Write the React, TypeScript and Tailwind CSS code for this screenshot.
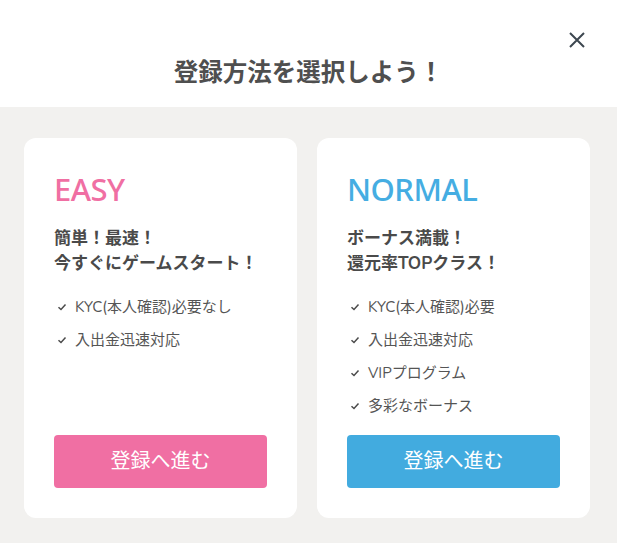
import React from "react";

const font = { fontFamily: '"Nunito", Lato, "Noto Sans CJK JP", sans-serif' };

interface PlanProps {
  name: string;
  accent: "pink" | "blue";
  lead: string[];
  points: string[];
}

function Check() {
  return (
    <svg width="10" height="10" viewBox="0 0 10 10" className="shrink-0">
      <path d="M1.5 5.2 L4 7.5 L8.5 2.5" fill="none" stroke="#4a4a4a" strokeWidth="1.5" />
    </svg>
  );
}

function PlanCard({ name, accent, lead, points }: PlanProps) {
  const isPink = accent === "pink";
  return (
    <div className="flex flex-col w-[273px] h-[380px] bg-white rounded-[12px] pt-[33px] px-[30px] pb-[30px]">
      <div
        className={`text-[31px] leading-[36px] font-medium ${isPink ? "text-[#f06fa3]" : "text-[#45ade2]"}`}
        style={{ fontFamily: '"Noto Sans", "Liberation Sans", sans-serif', letterSpacing: "-0.5px" }}
      >
        {name}
      </div>
      <div className="mt-[19px] text-[17px] leading-[25px] font-bold text-[#4a4a4a]">
        {lead.map((l) => (
          <div key={l}>{l}</div>
        ))}
      </div>
      <ul className="mt-[21px] flex flex-col gap-[13px]">
        {points.map((p) => (
          <li key={p} className="flex items-center gap-[8px] pl-[3px] text-[15px] leading-[20px] text-[#555]">
            <Check />
            <span>{p}</span>
          </li>
        ))}
      </ul>
      <button
        className={`mt-auto w-[213px] h-[53px] rounded-[4px] text-white text-[20px] ${isPink ? "bg-[#f06fa3]" : "bg-[#42abdf]"}`}
      >
        登録へ進む
      </button>
    </div>
  );
}

export default function App() {
  return (
    <div className="w-[617px] h-[543px] flex flex-col bg-[#f2f1ef]" style={font}>
      {/* header */}
      <div className="relative h-[107px] bg-white flex items-end justify-center pb-[18px]">
        <h1 className="text-[24.5px] leading-[32px] font-semibold text-[#4f4f4f]">登録方法を選択しよう！</h1>
        <button className="absolute right-[32px] top-[32px]">
          <svg width="16" height="16" viewBox="0 0 16 16">
            <path d="M1 1 L15 15 M15 1 L1 15" stroke="#3d4750" strokeWidth="2" />
          </svg>
        </button>
      </div>

      {/* plans */}
      <div className="flex gap-[20px] pt-[31px] pl-[24px]">
        <PlanCard
          name="EASY"
          accent="pink"
          lead={["簡単！最速！", "今すぐにゲームスタート！"]}
          points={["KYC(本人確認)必要なし", "入出金迅速対応"]}
        />
        <PlanCard
          name="NORMAL"
          accent="blue"
          lead={["ボーナス満載！", "還元率TOPクラス！"]}
          points={["KYC(本人確認)必要", "入出金迅速対応", "VIPプログラム", "多彩なボーナス"]}
        />
      </div>
    </div>
  );
}
